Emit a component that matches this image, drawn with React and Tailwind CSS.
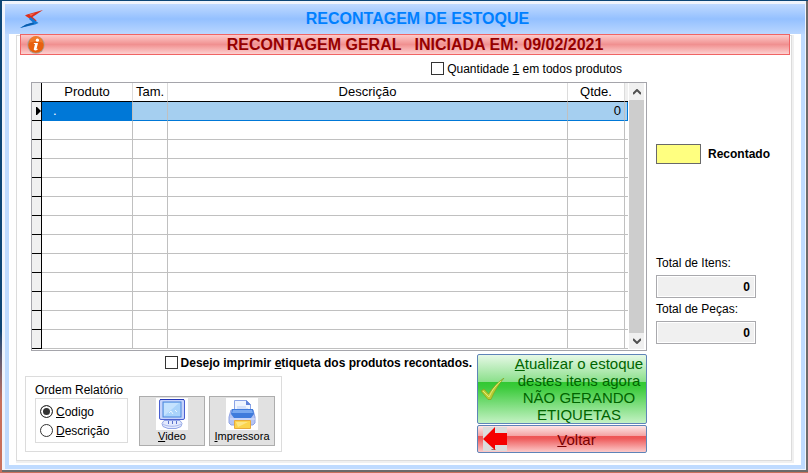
const rows = [
  { produto: '.', tam: '', descricao: '', qtde: 0, selected: true },
  ...Array.from({ length: 12 }, () => ({ produto: '', tam: '', descricao: '', qtde: '' })),
];

const LogoIcon = () => (
  <svg className="h-[19px] w-6" viewBox="0 0 24 19" aria-hidden="true">
    <path d="M23 0L7 4.500 5 5.500l9 6 1 1 1.500-2-4-3.500 3-2z" fill="#dc2f1c" />
    <path d="M9 4.500l6-1.500-4 3z" fill="#f4694f" />
    <path d="M0 18l15-3.500 3.500-1.500-8-6-1.500 2 4 3.500-7 2z" fill="#1478d4" />
    <path d="M0 18l6-3.500 7-2 1 1.500z" fill="#0b5cab" />
  </svg>
);

const InfoIcon = () => (
  <svg className="size-[18px]" viewBox="0 0 18 18" aria-hidden="true">
    <circle cx="9" cy="9" r="8.7" fill="#a9a09b" />
    <circle cx="9" cy="9" r="7.8" fill="#e8600f" />
    <path d="M2 7a7 7 0 0 1 14 0c-4-2-10-2-14 0z" fill="#f07a2c" />
    <circle cx="10.4" cy="4.2" r="1.6" fill="#fff" />
    <path d="M7 6.9h4l-1.5 6 1.3-.2-.3 1.1c-1.6.9-4 .9-3.7-.8l1.2-4.9H6.7z" fill="#fff" />
  </svg>
);

const MonitorIcon = () => (
  <svg className="size-8 bg-white" viewBox="0 0 32 32" aria-hidden="true">
    <path d="M8 22.500h16l2 3-1 3-5 2h-8l-5-2-1-3z" fill="#e3eafd" stroke="#93a6e6" />
    <path d="M12.500 23v3m4-3v3m4-3v3" fill="none" stroke="#5b72cd" />
    <path d="M7 26c4 3 14 3 18 0" fill="none" stroke="#a9b8ee" />
    <rect x="3.5" y="1.500" width="25" height="20" rx="1.500" fill="#c6d3fb" stroke="#4a5fd0" />
    <path d="M4 1.500h24" stroke="#2639b8" />
    <rect x="7" y="4" width="18" height="15" fill="#a9d3fb" stroke="#4a86dc" />
    <path d="M8 18V5h15z" fill="#c4e2fe" />
    <path d="M13 15l2-2 2 3m2-4l2 2" stroke="#e8f5ff" fill="none" />
  </svg>
);

const PrinterIcon = () => (
  <svg className="size-8 bg-white" viewBox="0 0 32 32" aria-hidden="true">
    <path d="M8.500 13V2.500h12l4 4V13z" fill="#eef4ff" stroke="#8ba4e6" />
    <path d="M20 2v5h5z" fill="#5f83da" />
    <path d="M11 9h9m-9 2h11" stroke="#b9cdf6" />
    <path d="M5 12h22l2 7v6l-2 2H5l-2-2v-6z" fill="#b5c4f3" stroke="#8fa3e4" />
    <path d="M6 11h21l1 5-3 4H8l-3-4z" fill="#3f7bdc" />
    <path d="M7 12h19l1 3H6z" fill="#78a8f0" />
    <path d="M4 21h25" stroke="#dde5fc" />
    <path d="M8.500 22.500h16v8h-16z" fill="#fbd44c" stroke="#e8aa3c" />
    <path d="M10 24h12l-10 5z" fill="#fde584" />
  </svg>
);

const CheckIcon = () => (
  <svg className="h-[23px] w-6 shrink-0" viewBox="0 0 24 23" aria-hidden="true">
    <path d="M0 13l3-2 4.500 5C12 9 17 4 23 0 17 7 13 14 10 21.500H7z" fill="#b9cc30" stroke="#7f9a1c" strokeWidth=".6" />
    <path d="M2 13l6 6C11 12 15 7 20 3" fill="none" stroke="#e2e878" />
  </svg>
);

const BackIcon = () => (
  <svg className="size-6 shrink-0 bg-[#dcdcdc]" viewBox="0 0 24 24" aria-hidden="true">
    <path d="M8 22h5l-1 1H9z" fill="#a66" />
    <path d="M0 12L12 0v6h12v12H12v5z" fill="#f50000" />
  </svg>
);

const Arrow = ({ d }) => (
  <svg className="h-[6px] w-2" viewBox="0 0 8 6" aria-hidden="true">
    <path d={d} fill="none" stroke="#505050" strokeWidth="2" />
  </svg>
);

const TickBox = ({ children, className = '' }) => (
  <label className={`flex items-center gap-[3px] ${className}`}>
    <input type="checkbox" className="size-[13px] appearance-none border border-[#333] bg-white checked:bg-[#333]" />
    <span>{children}</span>
  </label>
);

const Radio = ({ children, ...props }) => (
  <label className="flex h-[19px] items-center gap-[3px]">
    <input
      type="radio"
      name="ordem"
      className="size-[13px] appearance-none rounded-full border border-[#333] bg-white checked:bg-[#333] checked:shadow-[inset_0_0_0_2px_white]"
      {...props}
    />
    <span>{children}</span>
  </label>
);

const ReportButton = ({ icon, children }) => (
  <button
    type="button"
    className="flex h-[50px] w-[66px] flex-col items-center border border-[#adadad] bg-[#e1e1e1] pt-px text-[11px] leading-[13px]"
  >
    {icon}
    <span>{children}</span>
  </button>
);

const Total = ({ id, label, className }) => (
  <div className={className}>
    <label htmlFor={id} className="block leading-4">{label}</label>
    <input
      id={id}
      readOnly
      value="0"
      className="mt-1 block h-[23px] w-[100px] border border-[#a9a9ad] bg-[#f0f0f0] px-[5px] text-right font-bold shadow-[inset_0_0_0_1px_white] outline-none"
    />
  </div>
);

const StockGrid = () => (
  <div className="flex border border-[#a5a5ab] bg-white pb-px">
    <table className="min-w-0 flex-1 table-fixed border-separate border-spacing-0 text-[13px] leading-[18px]">
      <colgroup>
        <col className="w-[10px]" />
        <col className="w-[91px]" />
        <col className="w-[35px]" />
        <col />
        <col className="w-[57px]" />
        <col className="w-[3px]" />
      </colgroup>
      <thead>
        <tr className="h-[19px] *:border-b *:border-b-black *:p-0 *:font-normal">
          <th className="border-r border-r-black bg-[#f0f0f0]" />
          <th className="border-r border-r-[#dcdcdc]">Produto</th>
          <th className="border-r border-r-[#dcdcdc]">Tam.</th>
          <th className="border-r border-r-[#dcdcdc]">Descrição</th>
          <th className="border-r border-r-[#dcdcdc]">Qtde.</th>
          <th className="bg-[#f0f0f0]" />
        </tr>
      </thead>
      <tbody>
        {rows.map((row, i) => (
          <tr
            key={i}
            className={`h-[19px] *:border-b *:p-0 ${
              row.selected ? 'bg-[#a5cff0] *:border-b-[#0078d7]' : '*:border-b-[#c0c0c0]'
            }`}
          >
            <th className="border-r border-r-black border-b-black! bg-[#f0f0f0]">
              {row.selected && (
                <svg className="ml-1 h-2 w-[5px]" viewBox="0 0 5 8" aria-hidden="true">
                  <path d="M0 0h1l4 4-4 4H0z" />
                </svg>
              )}
            </th>
            <td className={`border-r border-r-[#c0c0c0] ${row.selected ? 'bg-[#0078d7] text-white' : ''}`}>
              <span className="pl-[11px]">{row.produto}</span>
            </td>
            <td className="border-r border-r-[#c0c0c0]">{row.tam}</td>
            <td className="border-r border-r-[#c0c0c0]">{row.descricao}</td>
            <td className="border-r border-r-[#c0c0c0] text-right">
              <span className="pr-[3px]">{row.qtde}</span>
            </td>
            <td className={row.selected ? 'border-r border-r-[#0078d7]' : ''} />
          </tr>
        ))}
      </tbody>
    </table>
    <div className="mr-[2px] ml-px flex w-[15px] flex-col bg-[#cdcdcd]">
      <button type="button" aria-label="Subir" className="flex h-[17px] items-center justify-center bg-[#f0f0f0]">
        <Arrow d="M0 5l4-4 4 4" />
      </button>
      <div className="flex-1" />
      <button type="button" aria-label="Descer" className="flex h-4 items-center justify-center bg-[#f0f0f0]">
        <Arrow d="M0 1l4 4 4-4" />
      </button>
    </div>
  </div>
);

export default function App() {
  return (
    <div className="min-h-screen bg-linear-to-b from-[#0c4676] from-70% to-[#c9705c] to-85% pt-px pb-px pl-[2px] font-['Liberation_Sans',Arial,sans-serif] text-xs text-black">
      <div className="border-r-2 border-b-2 border-[#6b6b6b]">
        <div className="border-t-[3px] border-r border-b border-l-[3px] border-[#f0f4fc] bg-[#bfdbff] pb-1">
          <header className="flex h-[30px] items-center bg-linear-to-b from-[#c0daff] via-[#94c0ff] via-50% to-[#bad7ff] pl-[15px]">
            <LogoIcon />
            <h1 className="flex-1 pr-[14px] text-center text-base font-bold text-[#0080ff]">RECONTAGEM DE ESTOQUE</h1>
          </header>

          <div className="mx-1 bg-white pt-px pr-[9px] pb-1 pl-[7px]">
            <main className="border border-[#dcdcdc] shadow-[1px_1px_0_1px_#f0f0f0]">
              <div className="-mt-[2px] mr-px ml-[3px] flex h-[21px] items-center border border-[#f06464] bg-linear-to-b from-[#fccaca] via-[#f09090] via-50% to-[#fcd0d0] pl-[6px]">
                <InfoIcon />
                <h2 className="flex-1 pr-1 text-center text-base leading-[19px] font-bold text-[#960000]">
                  RECONTAGEM GERAL &nbsp; INICIADA EM: 09/02/2021
                </h2>
              </div>

              <div className="flex gap-[9px] pl-[14px]">
                <section className="min-w-0 flex-1">
                  <div className="flex h-[27px] items-center justify-end pr-[25px]">
                    <TickBox>
                      Quantidade <u>1</u> em todos produtos
                    </TickBox>
                  </div>
                  <StockGrid />
                </section>

                <aside className="w-[135px] pt-[89px]">
                  <div className="flex items-center gap-[7px] font-bold">
                    <span className="h-5 w-[45px] border border-[#696969] bg-[#ffff80]" />
                    Recontado
                  </div>
                  <Total id="total-itens" label="Total de Itens:" className="mt-[91px]" />
                  <Total id="total-pecas" label="Total de Peças:" className="mt-[3px]" />
                </aside>
              </div>

              <div className="flex gap-[5px] pt-[3px] pr-[144px] pb-[7px] pl-2">
                <div className="flex-1">
                  <TickBox className="h-[17px] justify-end font-bold">
                    Desejo imprimir <u>e</u>tiqueta dos produtos recontados.
                  </TickBox>
                  <div className="mt-[5px] flex h-[76px] w-[257px] border border-[#dcdcdc] pl-[9px]">
                    <fieldset className="w-[93px] pt-[5px]">
                      <legend className="float-left leading-4">Ordem Relatório</legend>
                      <div className="clear-both h-[45px] border border-[#dcdcdc] pt-[3px] pl-1">
                        <Radio defaultChecked>
                          <u>C</u>odigo
                        </Radio>
                        <Radio>
                          <u>D</u>escrição
                        </Radio>
                      </div>
                    </fieldset>
                    <div className="flex gap-1 pt-[19px] pl-[11px]">
                      <ReportButton icon={<MonitorIcon />}>
                        <u>V</u>ideo
                      </ReportButton>
                      <ReportButton icon={<PrinterIcon />}>
                        <u>I</u>mpressora
                      </ReportButton>
                    </div>
                  </div>
                </div>

                <div className="flex w-[170px] flex-col gap-px">
                  <button
                    type="button"
                    className="flex h-[70px] items-center gap-[7px] rounded-xs border border-[#5e84b8] bg-[linear-gradient(#e6f8e6,#8ce08c_39%,#32c832_40%,#3ccb3c_48%,#c4f2c4)] pl-[3px] text-[15px] leading-[17px] text-[#006400]"
                  >
                    <CheckIcon />
                    <span className="flex-1 *:block">
                      <span>
                        <u>A</u>tualizar o estoque
                      </span>
                      <span>destes itens agora</span>
                      <span>NÃO GERANDO</span>
                      <span>ETIQUETAS</span>
                    </span>
                  </button>
                  <button
                    type="button"
                    className="flex h-[28px] items-center rounded-xs border border-[#5e84b8] bg-[linear-gradient(#fce6e6,#f4a0a0_39%,#ee5555_40%,#ee5a5a_48%,#fccaca)] pl-[5px] text-[15px] leading-[17px] text-[#780000]"
                  >
                    <BackIcon />
                    <span className="flex-1">
                      <u>V</u>oltar
                    </span>
                  </button>
                </div>
              </div>
            </main>
          </div>
        </div>
      </div>
    </div>
  );
}
